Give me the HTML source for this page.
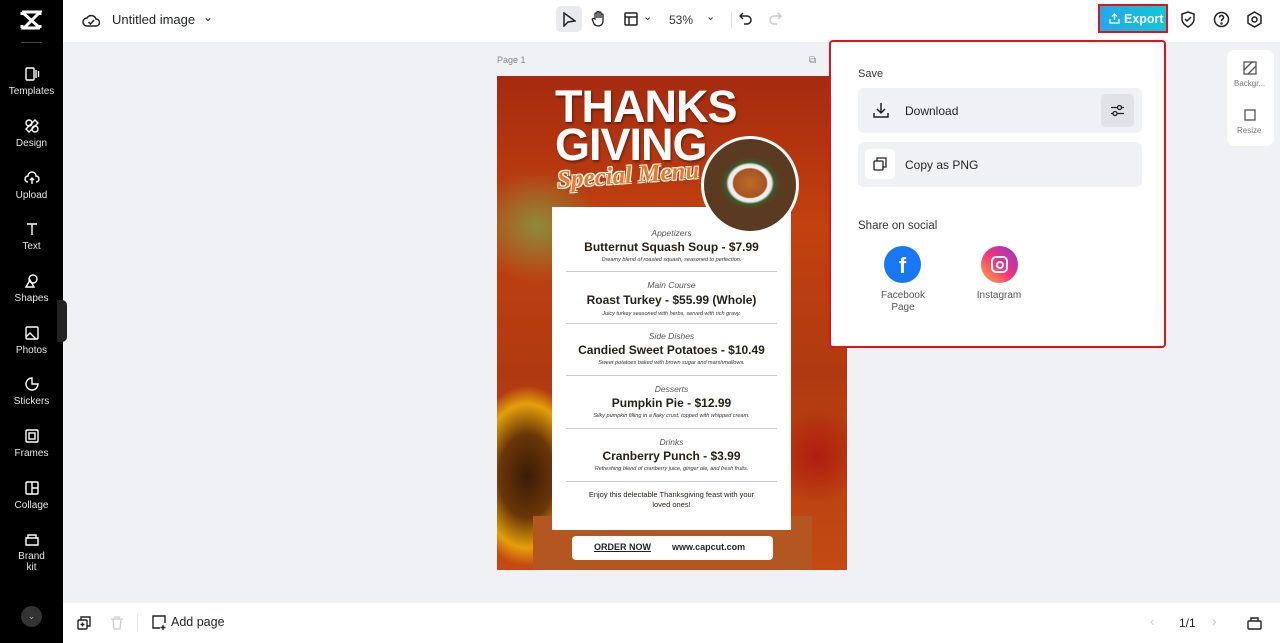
<!DOCTYPE html>
<html><head><meta charset="utf-8"><style>
*{box-sizing:border-box;margin:0;padding:0}
body{width:1280px;height:643px;overflow:hidden;background:#eff1f4;font-family:"Liberation Sans",sans-serif;position:relative;color:#1f2329}
.side{position:absolute;left:0;top:0;width:63px;height:643px;background:#000;color:#fff}
.side .it{position:absolute;left:0;width:63px;text-align:center;font-size:10px;color:#e6e6e6}
.side .it svg{display:block;margin:0 auto 4px}
.top{position:absolute;left:63px;top:0;right:0;height:42px;background:#fff}
.bot{position:absolute;left:63px;top:603px;right:0;height:40px;background:#fff}
.abs{position:absolute}
.poster{position:absolute;left:497px;top:76px;width:350px;height:494px;overflow:hidden;
background:radial-gradient(ellipse 80px 120px at 30px 400px,#3a1c05 0,#6b3608 35%,#e3a00a 60%,transparent 75%),radial-gradient(ellipse 90px 80px at 40px 150px,#8a8c3a 0,transparent 70%),radial-gradient(ellipse 60px 60px at 320px 380px,#b01c10 0,transparent 80%),linear-gradient(180deg,#a52a0f 0,#c2410f 30%,#b03a10 60%,#c44a12 100%)}
.card{position:absolute;left:55px;top:131px;width:239px;height:323px;background:#fff;text-align:center;color:#2a2115;z-index:1}
.cat{font-size:8.5px;font-style:italic;color:#555}
.dish{font-size:12px;font-weight:bold;margin-top:2px}
.desc{font-size:5.5px;font-style:italic;color:#333;margin-top:3px}
.sep{border-top:1px solid #ccc;margin:8px 14px 8px}
.panel{position:absolute;left:829px;top:40px;width:337px;height:308px;background:#fff;border:2px solid #e0131a;border-radius:4px}
.btn{position:absolute;left:27px;width:284px;height:45px;background:#eff1f4;border-radius:6px;font-size:12px}
</style></head><body>
<div class="side">
 <svg class="abs" style="left:20px;top:10px" width="22" height="20" viewBox="0 0 22 20"><path d="M2 2h18L4 18h16M2 2l18 16M2 2v3M20 2v3M2 18v-3M20 18v-3" stroke="#fff" stroke-width="3" fill="none"/></svg>
 <div class="abs" style="left:21px;top:42px;width:21px;height:1px;background:#444"></div>
 <div class="it" style="top:66px"><svg width="16" height="16" viewBox="0 0 16 16" fill="none" stroke="#fff" stroke-width="1.4"><rect x="2" y="2" width="8" height="12" rx="1"/><path d="M12 4v8M14.5 5v6"/></svg>Templates</div>
 <div class="it" style="top:118px"><svg width="16" height="16" viewBox="0 0 16 16" fill="none" stroke="#fff" stroke-width="1.4"><circle cx="5" cy="5" r="3"/><circle cx="11" cy="11" r="3"/><path d="M11 2l3 3-9 9-3-3z"/></svg>Design</div>
 <div class="it" style="top:170px"><svg width="16" height="16" viewBox="0 0 16 16" fill="none" stroke="#fff" stroke-width="1.4"><path d="M4 12a3 3 0 010-6 4 4 0 018 0 3 3 0 010 6M8 8v6M6 10l2-2 2 2"/></svg>Upload</div>
 <div class="it" style="top:221px"><svg width="16" height="16" viewBox="0 0 16 16" fill="none" stroke="#fff" stroke-width="1.4"><path d="M3 3h10M8 3v11"/></svg>Text</div>
 <div class="it" style="top:273px"><svg width="16" height="16" viewBox="0 0 16 16" fill="none" stroke="#fff" stroke-width="1.4"><circle cx="9" cy="6" r="4"/><path d="M2 14l4-7 4 7z"/></svg>Shapes</div>
 <div class="it" style="top:325px"><svg width="16" height="16" viewBox="0 0 16 16" fill="none" stroke="#fff" stroke-width="1.4"><rect x="2" y="2" width="12" height="12" rx="1"/><path d="M2 12l4-4 6 6"/></svg>Photos</div>
 <div class="it" style="top:376px"><svg width="16" height="16" viewBox="0 0 16 16" fill="none" stroke="#fff" stroke-width="1.4"><path d="M14 8A6 6 0 118 2v6z"/></svg>Stickers</div>
 <div class="it" style="top:428px"><svg width="16" height="16" viewBox="0 0 16 16" fill="none" stroke="#fff" stroke-width="1.4"><rect x="2" y="2" width="12" height="12" rx="1"/><rect x="5" y="5" width="6" height="6"/></svg>Frames</div>
 <div class="it" style="top:480px"><svg width="16" height="16" viewBox="0 0 16 16" fill="none" stroke="#fff" stroke-width="1.4"><rect x="2" y="2" width="12" height="12" rx="1"/><path d="M8 2v12M8 8h6"/></svg>Collage</div>
 <div class="it" style="top:531px"><svg width="16" height="16" viewBox="0 0 16 16" fill="none" stroke="#fff" stroke-width="1.4"><path d="M2 7h12v7H2zM4 7V4h8v3"/></svg>Brand<br>kit</div>
 <div class="abs" style="left:21px;top:606px;width:21px;height:21px;border-radius:50%;background:#333;color:#aaa;font-size:9px;text-align:center;line-height:21px">⌄</div>
 <div class="abs" style="left:57px;top:300px;width:10px;height:42px;background:#222;border-radius:0 5px 5px 0"></div>
</div>
<div class="top">
 <svg class="abs" style="left:19px;top:12px" width="18" height="16" viewBox="0 0 18 16" fill="none" stroke="#222" stroke-width="1.5"><path d="M5 14a4 4 0 010-8 5 5 0 019 1 3.5 3.5 0 010 7z"/><path d="M6.5 10l2 2 3.5-4"/></svg>
 <div class="abs" style="left:49px;top:12px;font-size:13px">Untitled image</div>
 <div class="abs" style="left:140px;top:10px;font-size:12px">⌄</div>
 <div class="abs" style="left:493px;top:6px;width:26px;height:26px;background:#e8eaed;border-radius:5px"></div>
 <svg class="abs" style="left:499px;top:12px" width="14" height="15" viewBox="0 0 14 15" fill="none" stroke="#222" stroke-width="1.5"><path d="M2 1v13l4-4 7-1z"/></svg>
 <svg class="abs" style="left:528px;top:10px" width="15" height="17" viewBox="0 0 15 17" fill="none" stroke="#222" stroke-width="1.3"><path d="M4 9V4a1 1 0 012 0v4V2.5a1 1 0 012 0V8V3a1 1 0 012 0v5V5a1 1 0 012 0v6c0 3-2 5-5 5-2 0-3-1-4-2L1.5 10a1 1 0 011.5-1.3z"/></svg>
 <svg class="abs" style="left:561px;top:12px" width="14" height="14" viewBox="0 0 14 14" fill="none" stroke="#222" stroke-width="1.5"><rect x="1" y="1" width="12" height="12" rx="1"/><path d="M1 5h12M5 5v8"/></svg>
 <div class="abs" style="left:580px;top:10px;font-size:11px">⌄</div>
 <div class="abs" style="left:606px;top:13px;font-size:12px;color:#333">53%</div>
 <div class="abs" style="left:643px;top:10px;font-size:11px">⌄</div>
 <div class="abs" style="left:668px;top:12px;width:1px;height:16px;background:#ddd"></div>
 <svg class="abs" style="left:676px;top:12px" width="14" height="14" viewBox="0 0 14 14" fill="none" stroke="#222" stroke-width="1.5"><path d="M4 1L1 4l3 3M1 4h7a4 4 0 010 8H5"/></svg>
 <svg class="abs" style="left:705px;top:12px" width="14" height="14" viewBox="0 0 14 14" fill="none" stroke="#ccc" stroke-width="1.5"><path d="M10 1l3 3-3 3M13 4H6a4 4 0 000 8h3"/></svg>
 <div class="abs" style="left:1035px;top:4px;width:70px;height:29px;border:2px solid #e0131a;background:linear-gradient(90deg,#25a8e8,#12c6d8);color:#fff;font-weight:bold;font-size:12.5px;padding:6px 0 0 24px">Export</div>
 <svg class="abs" style="left:1046px;top:13px" width="11" height="11" viewBox="0 0 11 11" fill="none" stroke="#fff" stroke-width="1.2"><path d="M5.5 7V1M3 3.5l2.5-2.5 2.5 2.5M1 6v4h9V6"/></svg>
 <svg class="abs" style="left:1117px;top:11px" width="16" height="17" viewBox="0 0 16 17" fill="none" stroke="#222" stroke-width="1.5"><path d="M8 1l6 2v5c0 4-3 6-6 8-3-2-6-4-6-8V3z"/><path d="M5 8l2 2 4-4"/></svg>
 <svg class="abs" style="left:1150px;top:11px" width="17" height="17" viewBox="0 0 17 17" fill="none" stroke="#222" stroke-width="1.5"><circle cx="8.5" cy="8.5" r="7"/><path d="M6.5 6.5a2 2 0 113 1.7c-1 .5-1 1-1 2"/><circle cx="8.5" cy="12.5" r=".5"/></svg>
 <svg class="abs" style="left:1183px;top:11px" width="17" height="17" viewBox="0 0 17 17" fill="none" stroke="#222" stroke-width="1.5"><path d="M8.5 1l6.5 3.8v7.4L8.5 16 2 12.2V4.8z"/><circle cx="8.5" cy="8.5" r="2.5"/></svg>
</div>
<div class="abs" style="left:497px;top:55px;font-size:9px;color:#888">Page 1</div>
<div class="abs" style="left:809px;top:55px;font-size:10px;color:#888">⧉</div>
<div class="poster">
 <div class="abs" style="left:58px;top:12px;font-size:45px;font-weight:900;color:#fff;line-height:38px;letter-spacing:-1px;text-shadow:1px 2px 2px rgba(0,0,0,.4)">THANKS<br>GIVING</div>
 <div class="abs" style="left:60px;top:86px;font-size:25px;font-style:italic;font-weight:bold;color:#e8782a;font-family:'Liberation Serif',serif;text-shadow:1px 1px 0 #fff,-1px -1px 0 #fff,1px -1px 0 #fff,-1px 1px 0 #fff;transform:rotate(-4deg)">Special Menu</div>
 <div class="abs" style="left:204px;top:60px;width:98px;height:98px;border-radius:50%;border:3px solid #fff;background:radial-gradient(ellipse 30px 26px at 50% 48%,#c06a2a 0,#a45520 55%,#f2f2f2 60%,#e8e8e8 72%,#3b5a2a 80%,#5a3a20 100%);z-index:2"></div>
 <div class="abs" style="left:36px;top:440px;width:279px;height:54px;background:#b4561f"></div>
 <div class="card">
  <div style="height:21px"></div>
  <div class="cat">Appetizers</div><div class="dish">Butternut Squash Soup - $7.99</div><div class="desc">Dreamy blend of roasted squash, seasoned to perfection.</div>
  <div class="sep"></div>
  <div class="cat">Main Course</div><div class="dish" style="margin-top:3px">Roast Turkey - $55.99 (Whole)</div><div class="desc" style="margin-top:4px">Juicy turkey seasoned with herbs, served with rich gravy.</div>
  <div class="sep" style="margin-top:6px;margin-bottom:7px"></div>
  <div class="cat">Side Dishes</div><div class="dish">Candied Sweet Potatoes - $10.49</div><div class="desc">Sweet potatoes baked with brown sugar and marshmallows.</div>
  <div class="sep" style="margin-top:9px"></div>
  <div class="cat">Desserts</div><div class="dish">Pumpkin Pie - $12.99</div><div class="desc">Silky pumpkin filling in a flaky crust, topped with whipped cream.</div>
  <div class="sep" style="margin-top:9px"></div>
  <div class="cat">Drinks</div><div class="dish">Cranberry Punch - $3.99</div><div class="desc">Refreshing blend of cranberry juice, ginger ale, and fresh fruits.</div>
  <div class="sep" style="margin-top:9px"></div>
  <div style="font-size:7.5px;padding:0 30px;line-height:10px;margin-top:6px">Enjoy this delectable Thanksgiving feast with your loved ones!</div>
 </div>
 <div class="abs" style="left:75px;top:460px;width:201px;height:24px;background:#fff;border-radius:4px;font-size:9px;font-weight:bold;padding-top:6px;z-index:2"><span style="margin-left:22px;text-decoration:underline">ORDER NOW</span><span style="margin-left:21px">www.capcut.com</span></div>
</div>
<div class="panel">
 <div class="abs" style="left:27px;top:26px;font-size:11px;color:#333">Save</div>
 <div class="btn" style="top:46px"><svg class="abs" style="left:14px;top:13px" width="18" height="18" viewBox="0 0 18 18" fill="none" stroke="#222" stroke-width="1.5"><path d="M9 2v10M5 8l4 4 4-4M2 12v4h14v-4"/></svg><span class="abs" style="left:47px;top:16px">Download</span>
  <div class="abs" style="left:243px;top:6px;width:33px;height:33px;background:#dfe2e6;border-radius:5px"><svg style="margin:9px" width="15" height="15" viewBox="0 0 15 15" fill="none" stroke="#222" stroke-width="1.3"><path d="M1 4.5h13M1 10.5h13"/><circle cx="9.5" cy="4.5" r="2" fill="#dfe2e6"/><circle cx="5" cy="10.5" r="2" fill="#dfe2e6"/></svg></div></div>
 <div class="btn" style="top:100px"><div class="abs" style="left:7px;top:7px;width:30px;height:30px;background:#fff;border-radius:5px"></div><svg class="abs" style="left:15px;top:15px" width="14" height="14" viewBox="0 0 14 14" fill="none" stroke="#222" stroke-width="1.3"><rect x="1" y="4" width="9" height="9" rx="1"/><path d="M4 4V1h9v9h-3"/></svg><span class="abs" style="left:47px;top:16px">Copy as PNG</span></div>
 <div class="abs" style="left:27px;top:178px;font-size:11.5px;color:#333">Share on social</div>
 <div class="abs" style="left:53px;top:204px;width:37px;height:37px;border-radius:50%;background:#1877f2;color:#fff;font-weight:bold;font-size:22px;text-align:center;line-height:40px">f</div>
 <div class="abs" style="left:32px;top:248px;width:80px;text-align:center;font-size:10px;color:#555;line-height:12px">Facebook<br>Page</div>
 <div class="abs" style="left:150px;top:204px;width:37px;height:37px;border-radius:50%;background:linear-gradient(45deg,#fdb23a,#f0327a 50%,#8a3bd6)"><div style="margin:10px;width:17px;height:17px;border:2px solid #fff;border-radius:5px;position:relative"><div style="position:absolute;left:2.5px;top:2.5px;width:8px;height:8px;border:2px solid #fff;border-radius:50%"></div></div></div>
 <div class="abs" style="left:128px;top:248px;width:80px;text-align:center;font-size:10px;color:#555">Instagram</div>
</div>
<div class="abs" style="left:1227px;top:50px;width:47px;height:96px;background:#fff;border-radius:8px">
 <svg class="abs" style="left:16px;top:11px" width="14" height="14" viewBox="0 0 14 14" fill="none" stroke="#555" stroke-width="1.3"><rect x="1" y="1" width="12" height="12"/><path d="M1 9l8-8M5 13l8-8"/></svg>
 <div class="abs" style="left:7px;top:29px;font-size:8px;color:#777">Backgr...</div>
 <svg class="abs" style="left:16px;top:58px" width="14" height="14" viewBox="0 0 14 14" fill="none" stroke="#555" stroke-width="1.3"><rect x="2" y="2" width="10" height="10"/></svg>
 <div class="abs" style="left:10px;top:76px;font-size:8px;color:#777">Resize</div>
</div>
<div class="bot">
 <svg class="abs" style="left:14px;top:13px" width="14" height="14" viewBox="0 0 14 14" fill="none" stroke="#222" stroke-width="1.4"><rect x="1" y="4" width="9" height="9" rx="1"/><path d="M4 4V1h9v9h-3M5.5 6.5v4M3.5 8.5h4"/></svg>
 <svg class="abs" style="left:47px;top:13px" width="14" height="14" viewBox="0 0 14 14" fill="none" stroke="#ccc" stroke-width="1.3"><path d="M1 3h12M3 3l1 10h6l1-10M5 3V1h4v2"/></svg>
 <div class="abs" style="left:74px;top:11px;width:1px;height:17px;background:#e5e5e5"></div>
 <svg class="abs" style="left:89px;top:12px" width="15" height="15" viewBox="0 0 15 15" fill="none" stroke="#222" stroke-width="1.4"><path d="M8 13H1V1h12v7M11 10v5M8.5 12.5h5"/></svg>
 <div class="abs" style="left:108px;top:12px;font-size:12.5px">Add page</div>
 <div class="abs" style="left:1087px;top:10px;font-size:14px;color:#ccc">‹</div>
 <div class="abs" style="left:1116px;top:13px;font-size:12px">1/1</div>
 <div class="abs" style="left:1149px;top:10px;font-size:14px;color:#ccc">›</div>
 <svg class="abs" style="left:1184px;top:13px" width="15" height="14" viewBox="0 0 15 14" fill="none" stroke="#222" stroke-width="1.4"><rect x="1" y="5" width="13" height="8" rx="1"/><path d="M4 5V2h7v3"/></svg>
</div>
</body></html>
